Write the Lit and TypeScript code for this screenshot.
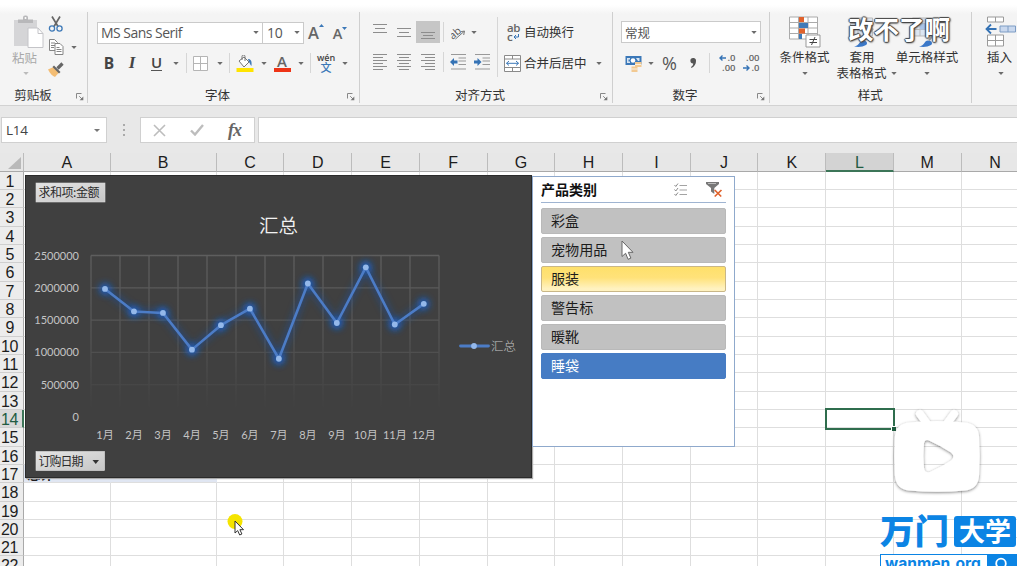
import { LitElement, html, css, svg } from "lit";
import { customElement } from "lit/decorators.js";

const COLS = ["A", "B", "C", "D", "E", "F", "G", "H", "I", "J", "K", "L", "M", "N"];
const ROWS = Array.from({ length: 22 }, (_, i) => i + 1);
const ITEMS = [
  { name: "彩盒", kind: "" },
  { name: "宠物用品", kind: "" },
  { name: "服装", kind: "hover" },
  { name: "警告标", kind: "" },
  { name: "暖靴", kind: "" },
  { name: "睡袋", kind: "on" },
];
const VALUES = [1985000, 1637000, 1614000, 1046000, 1425000, 1680000, 905000, 2070000, 1458000, 2320000, 1435000, 1755000];

const arrow = (c = "") => html`<svg class="arr ${c}" width="6" height="3" viewBox="0 0 6 3"><path d="M.3 0h5.4L3 3z" fill="currentColor"/></svg>`;
const launcher = html`<svg class="launch" width="8" height="8" viewBox="0 0 8 8" fill="none" stroke="#888"><path d="M.5 5.5v-5h5M3.200 3.200l3 3"/><path d="M7.300 3.600v3.700H3.600z" fill="#777" stroke="none"/></svg>`;
const sep = html`<i class="sep"></i>`;
const lines = (rows: number[][]) => html`<svg width="16" height="18" viewBox="0 0 16 18" stroke="#8d8d8d" stroke-width="1">${rows.map(
  ([a, b, y]) => svg`<path d="M${a} ${y}H${b}"/>`)}</svg>`;
const para = (kind: string) =>
  lines([0, 1, 2, 3, 4, 5].map((i) => {
    const short = i % 2 === 1;
    const y = 1.5 + i * 3;
    if (kind === "l") return [1, short ? 11 : 15, y];
    if (kind === "c") return [short ? 3 : 1, short ? 13 : 15, y];
    return [short ? 5 : 1, 15, y];
  }));
const tinyArrow = (left: boolean) => html`<svg class="tiny" width="7" height="6" viewBox="0 0 7 6" fill="none" stroke="#3573b5" stroke-width="1.400">${
  left ? svg`<path d="M7 3H1M3.500.500L1 3l2.500 2.500"/>` : svg`<path d="M0 3h6M3.500.500L6 3 3.500 5.500"/>`}</svg>`;
const pointer = html`<svg width="13" height="21" viewBox="0 0 13 21"><path d="M1 1v15.500l3.600-3.200 2.500 6 2.800-1.200-2.600-5.800H12z" fill="#fff" stroke="#666" stroke-width="1"/></svg>`;

@customElement("pivot-chart")
class PivotChart extends LitElement {
  static styles = css`
    :host { display: block; background: #404040; border: 1px solid #2b2b2b; box-sizing: border-box; box-shadow: 1px 1px 1px #aaa; }
    svg { display: block; }
    .num { font: 11px Lato, "Noto Sans CJK SC", sans-serif; fill: #c4c4c4; }
    .title { font: 350 19.500px "Noto Sans CJK SC", sans-serif; fill: #f2f2f2; }
    .leg { font: 300 12.5px "Noto Sans CJK SC", sans-serif; fill: #c4c4c4; }
    .btn { font: 12px "Noto Sans CJK SC", sans-serif; fill: #2c2c2c; }
  `;
  render() {
    const x = (i: number) => 105 + i * 28.98;
    const y = (v: number) => 417.2 - (v / 500000) * 32.3;
    const pts = VALUES.map((v, i) => `${x(i)},${y(v)}`).join(" ");
    return html`<svg width="505" height="301" viewBox="26 176 505 301">
      <defs>
        <linearGradient id="fade" gradientUnits="userSpaceOnUse" x1="0" y1="255" x2="0" y2="417">
          <stop offset="0" stop-color="#5e5e5e"/><stop offset=".5" stop-color="#545454"/><stop offset=".95" stop-color="#404040"/>
        </linearGradient>
        <linearGradient id="face" x1="0" y1="0" x2="1" y2="1"><stop offset="0" stop-color="#e4e4e4"/><stop offset="1" stop-color="#c6c6c6"/></linearGradient>
        <filter id="glow" filterUnits="userSpaceOnUse" x="80" y="245" width="370" height="140"><feGaussianBlur stdDeviation="3.500"/></filter>
      </defs>
      <g stroke="url(#fade)" fill="none" stroke-width="1.300">
        ${Array.from({ length: 13 }, (_, i) => svg`<path d="M${91 + i * 29} 255.500l.01 161"/>`)}
        ${[0, 1, 2, 3, 4].map((i) => svg`<path d="M91 ${255.5 + i * 32.3}l348 .01"/>`)}
      </g>
      <polyline points=${pts} fill="none" stroke="#1a4f9c" stroke-width="6" opacity=".6" filter="url(#glow)"/>
      <g filter="url(#glow)" fill="#1468e0" opacity=".85">${VALUES.map((v, i) => svg`<circle cx=${x(i)} cy=${y(v)} r="5.500"/>`)}</g>
      <polyline points=${pts} fill="none" stroke="#4c7cc6" stroke-width="2.600" stroke-linejoin="round"/>
      <g fill="#94b8ea">${VALUES.map((v, i) => svg`<circle cx=${x(i)} cy=${y(v)} r="2.900"/>`)}</g>
      <g class="num" text-anchor="end">
        ${[2500000, 2000000, 1500000, 1000000, 500000, 0].map((n, i) => svg`<text x="79" y=${259.5 + i * 32.3}>${n}</text>`)}
      </g>
      <g class="num" text-anchor="middle">${VALUES.map((_, i) => svg`<text x=${x(i)} y="438.500">${i + 1}月</text>`)}</g>
      <text class="title" x="259" y="232.500">汇总</text>
      <path d="M460.500 346h28" stroke="#4c7cc6" stroke-width="2.800" stroke-linecap="round"/><circle cx="474" cy="346" r="2.900" fill="#94b8ea"/>
      <text class="leg" x="491" y="350.500">汇总</text>
      <rect x="36" y="183" width="69" height="19" fill="url(#face)" stroke="#d9d9d9" stroke-width=".6"/>
      <text class="btn" x="38.500" y="197" textLength="61">求和项:金额</text>
      <rect x="36" y="451.500" width="68.500" height="19" fill="url(#face)" stroke="#e5e5e5" stroke-width=".6"/>
      <text class="btn" x="38.500" y="465.500" textLength="45">订购日期</text>
      <path d="M92.500 460h6.500l-3.250 4z" fill="#333"/>
    </svg>`;
  }
}

@customElement("pivot-slicer")
class PivotSlicer extends LitElement {
  static styles = css`
    :host { display: flex; flex-direction: column; box-sizing: border-box; background: #fff; border: 1px solid #8fa9cc; padding: 0 8px; font-family: "Noto Sans CJK SC", sans-serif; }
    header { display: flex; align-items: center; height: 26px; border-bottom: 1.5px solid #9fb4d1; box-sizing: border-box; font-weight: 700; font-size: 14px; line-height: 22px; color: #111; }
    header span { margin-top: -1px; }
    .grow { flex: 1; }
    .funnel { margin: 0 3px 0 18px; }
    .list { display: flex; flex-direction: column; gap: 3px; padding-top: 5px; }
    .item { height: 26px; box-sizing: border-box; border-radius: 2px; background: #c1c1c1; border: 1px solid #b9b9b9; padding-left: 9px; font-size: 14.100px; line-height: 22px; color: #1c1c1c; }
    .hover { background: linear-gradient(#fee06a, #ffe27a 45%, #fff2c0 90%); border-color: #c9b787; }
    .on { background: #467cc4; border-color: #467cc4; color: #fff; }
  `;
  render() {
    return html`<header><span>产品类别</span><span class="grow"></span>
      <svg width="14" height="14" viewBox="0 0 14 14" fill="none" stroke="#a3a3a3"><path d="M5.500 2.500H13M5.500 7H13M5.500 11.500H13"/><path d="M.5 2l1.300 1.500L4 .5M.5 6.500L1.800 8 4 5M.5 11l1.300 1.500L4 9.500" stroke="#8c8c8c"/></svg>
      <svg class="funnel" width="17" height="17" viewBox="0 0 17 17"><path d="M0 1h13v2L8.300 7v6L5 10.500V7L0 3z" fill="#777"/><path d="M2 2.500h8" stroke="#bbb"/><path d="M8.700 9l6.500 6.500M15.500 9l-6.800 6.500" stroke="#e0622c" stroke-width="1.700"/></svg>
    </header>
    <div class="list">${ITEMS.map((i) => html`<div class="item ${i.kind}">${i.name}</div>`)}</div>`;
  }
}

@customElement("excel-ribbon")
class ExcelRibbon extends LitElement {
  static styles = css`
    :host { display: grid; grid-template-columns: 88px 272px 253px 157px 201.500px 45.500px; height: 106px; box-sizing: border-box; padding-top: 12px; border-bottom: 1.500px solid #d2d2d2; background: linear-gradient(#fff, #fff 5px, #f4f4f4 14px); font: 12.500px "Noto Sans CJK SC", sans-serif; color: #333; overflow: hidden; }
    svg { display: block; flex: none; }
    .arr { color: #6b6b6b; }
    .dim { color: #bbb; }
    .group { display: flex; flex-direction: column; height: 91px; border-right: 1px solid #cfcfcf; box-sizing: border-box; min-width: 0; }
    .group:last-child { border: 0; }
    .body { height: 74px; flex: none; box-sizing: border-box; }
    .foot { display: grid; grid-template-columns: 1fr 8px; align-items: center; height: 18px; padding-right: 4px; text-align: center; line-height: 18px; }
    .foot.lead { padding-right: 3px; }
    .foot.lead span { padding-right: 10px; }
    .foot.even { grid-template-columns: 1fr; padding: 0; }
    .launch { margin-top: 3px; }
    .sep { width: 1px; height: 20px; background: #d6d6d6; }
    .row { display: grid; align-items: center; justify-items: center; }
    .clip { display: grid; grid-template-columns: 36px 20px 14px; column-gap: 2px; padding-left: 10px; }
    .paste { display: flex; flex-direction: column; align-items: center; color: #a8a8a8; padding-top: 3px; line-height: 18px; }
    .paste .arr { margin-top: 5px; margin-right: 4px; }
    .paste span { margin-right: 7px; }
    .paste svg:first-child { margin-right: -1px; }
    .tools { display: grid; grid-template-rows: 16px 16px 15px; gap: 7px; padding-top: 4px; }
    .mid { padding-top: 34px; padding-left: 1px; }
    .f1 { grid-template-columns: 166px 41px 24px 24px; padding: 9px 0 0 9px; height: 31px; justify-content: start; box-sizing: border-box; }
    .box { display: flex; align-items: center; justify-content: space-between; height: 22px; width: 100%; box-sizing: border-box; border: 1px solid #cacaca; background: #fff; padding: 0 3px 0 3px; font: 14px "Open Sans", "Noto Sans CJK SC", sans-serif; letter-spacing: -.52px; color: #555; }
    .box.size { border-left: 0; padding-left: 4px; letter-spacing: -.3px; }
    .f2 { grid-template-columns: 22px 24px 25px 14px 6px 23px 15px 5px 25px 13px 24px 14px 5px 26px 11px; height: 40px; padding-left: 10px; justify-content: start; }
    .bt { font: 700 15.500px "Open Sans", sans-serif; color: #444; }
    .it { font: italic 700 17px "Liberation Serif", serif; }
    .un { display: block; font-weight: 600; font-size: 15px; line-height: 15px; border-bottom: 1.500px solid #555; }
    .big { font: 600 16.500px "Open Sans", sans-serif; color: #666; display: flex; }
    .big.small { font-size: 14.500px; padding-top: 1px; }
    .big svg { margin-top: 3px; }
    .fcol { display: flex; flex-direction: column; align-items: center; font: 600 15px/14px "Open Sans", sans-serif; color: #666; }
    .bar { width: 17px; height: 4px; background: #ee3416; }
    .wen { display: flex; flex-direction: column; align-items: center; font: 600 9px/8px "Open Sans", sans-serif; color: #444; }
    .wen b { font: 500 11px/11px "Noto Sans CJK SC", sans-serif; color: #3b78b8; }
    .align { display: grid; grid-template-columns: 129px 7px auto; padding-left: 8px; justify-content: start; }
    .a1 { grid-template-columns: 24px 24px 24px 6px 24px 7px; height: 22px; margin-top: 9px; justify-content: start; }
    .a2 { grid-template-columns: 24px 24px 24px 6px 24px 24px; height: 22px; margin-top: 8px; justify-content: start; }
    .sel { display: grid; place-items: center; width: 24px; height: 22px; background: #c6c6c6; }
    .tall { width: 1px; height: 60px; margin-top: 5px; background: #d6d6d6; }
    .txt { display: grid; grid-template-columns: 16px auto auto; align-items: center; column-gap: 4px; justify-content: start; height: 22px; margin-top: 9px; line-height: 20px; }
    .txt + .txt { margin-top: 9px; }
    .txt .arr { margin-left: 5px; }
    .ab { display: grid; font: 600 11.500px/9px "Open Sans", sans-serif; color: #666; padding-left: 3px; letter-spacing: -.3px; }
    .ab span { display: flex; align-items: center; gap: 1px; }
    .num { padding: 9px 8px 0; }
    .num .box { font: 12.500px "Noto Sans CJK SC", sans-serif; letter-spacing: 0; }
    .n2 { grid-template-columns: 24px 12px 25px 22px 10px 27px 21px; height: 40px; justify-content: start; }
    .pct { font: 18px "Open Sans", sans-serif; color: #555; }
    .dec { display: grid; justify-items: end; font: 600 9.500px/10px "Open Sans", sans-serif; color: #666; white-space: nowrap; }
    .dec span { display: flex; align-items: center; gap: 1px; }
    .styles { display: grid; grid-template-columns: 55px 60px 70px; padding: 3px 0 0 7px; }
    .col { display: flex; flex-direction: column; align-items: center; line-height: 17px; white-space: nowrap; }
    .col > svg:first-child { height: 33px; }
    .col > .arr { margin-top: 7px; }
    .two { display: flex; align-items: center; gap: 4px; margin-right: -9px; line-height: 16px; }
    .cells { padding: 3px 0 0 13px; }
    .cells .col { width: 32px; }
    .cells .col > span { margin-right: 2px; }
  `;
  render() {
    return html`
    <div class="group">
      <div class="body clip">
        <div class="paste">
          <svg width="31" height="34" viewBox="0 0 31 34"><path d="M1 5h23v26H1z" fill="#d5d5d7"/><path d="M5 4.500h5V2.500a2 2 0 0 1 2-2h1a2 2 0 0 1 2 2v2h5V8H5z" fill="#b8b8ba"/><circle cx="12.500" cy="3" r="1" fill="#fff"/><path d="M15 13h10l5 5.500V32.500H15z" fill="#fff" stroke="#c4c4c8"/><path d="M25 13v5.500h5" fill="none" stroke="#c4c4c8"/></svg>
          <span>粘贴</span>${arrow("dim")}
        </div>
        <div class="tools">
          <svg width="16" height="16" viewBox="0 0 16 16" fill="none"><path d="M4 .5l6 10M12 .5l-6 10" stroke="#666" stroke-width="1.700"/><circle cx="4" cy="12.500" r="2.600" stroke="#3f7ab8" stroke-width="1.300"/><circle cx="11.500" cy="12.500" r="2.600" stroke="#3f7ab8" stroke-width="1.300"/></svg>
          <svg width="17" height="17" viewBox="0 0 17 17" fill="#fff" stroke="#858585"><path d="M1.500.500h5l3 3v8h-8z"/><path d="M3 4h4M3 6.500h4M3 8.500h3"/><path d="M7 4.500h5l3 3v8H7z"/><path d="M8.500 8.500h3M8.500 10.500h5M8.500 12.500h5"/></svg>
          <svg width="16" height="15" viewBox="0 0 16 15"><path d="M0 7.500L5.500 5l5.500 5.500L7 15c-2.500-1-5-3.500-7-7.500z" fill="#f3bd74"/><path d="M6 3.500l6.500 6.500-1.500 1.500L4.500 5z" fill="#666"/><path d="M9.500 6.500l5-5" stroke="#666" stroke-width="3.200"/></svg>
        </div>
        <div class="mid">${arrow()}</div>
      </div>
      <div class="foot lead"><span>剪贴板</span>${launcher}</div>
    </div>

    <div class="group">
      <div class="body">
        <div class="row f1">
          <div class="box"><span>MS Sans Serif</span>${arrow()}</div>
          <div class="box size"><span>10</span>${arrow()}</div>
          <div class="big">A<svg width="5" height="3"><path d="M0 3h5L2.500 0z" fill="#3b78b8"/></svg></div>
          <div class="big small">A<svg width="5" height="3"><path d="M0 0h5L2.500 3z" fill="#3b78b8"/></svg></div>
        </div>
        <div class="row f2">
          <span class="bt">B</span><span class="bt it">I</span><span class="bt un">U</span>${arrow()}${sep}
          <svg width="15" height="15" viewBox="0 0 15 15" fill="#fff" stroke="#b5b5b5"><path d="M.5.500h14v14H.500zM7.500.500v14M.5 7.500h14"/></svg>${arrow()}${sep}
          <svg width="18" height="17" viewBox="0 0 18 17"><path d="M3 6l5-4 5 5-5 5z" fill="#fff" stroke="#777"/><path d="M6 5V1.500a1.500 1.500 0 0 1 3 0V6" fill="none" stroke="#777"/><path d="M12 4c3 0 4 2 3.500 7-1.500-1-1.500-3-2.500-4z" fill="#3f7ab8"/><path d="M.5 13h17v4H.5z" fill="#ffe400"/></svg>${arrow()}
          <div class="fcol">A<i class="bar"></i></div>${arrow()}${sep}
          <div class="wen">wén<b>文</b></div>${arrow()}
        </div>
      </div>
      <div class="foot"><span>字体</span>${launcher}</div>
    </div>

    <div class="group">
      <div class="body align">
        <div>
          <div class="row a1">
            ${lines([[1, 15, 1.5], [3, 13, 5.5], [1, 15, 9.5]])}
            ${lines([[1, 15, 5.5], [3, 13, 9.5], [1, 15, 13.5]])}
            <div class="sel">${lines([[1, 15, 9.5], [3, 13, 12.5], [1, 15, 15.5]])}</div>${sep}
            <svg width="15" height="15" viewBox="0 0 15 15"><text x="-2" y="11" font-size="10.500" font-family="Open Sans" fill="#555" transform="rotate(-42 5 8)">ab</text><path d="M4.500 14L13 6.500M13.500 6l-4 .8M13.500 6l-.8 4" stroke="#777" fill="none"/></svg>${arrow()}
          </div>
          <div class="row a2">
            ${para("l")}${para("c")}${para("r")}${sep}
            <svg width="16" height="16" viewBox="0 0 16 16"><path d="M1 .500h15M8.500 4h7.500M8.500 7h7.500M8.500 10.500h7.500M1 15h15" stroke="#999"/><path d="M0 8l4-4v2.500h3.500v3H4V12z" fill="#3573b5"/></svg>
            <svg width="16" height="16" viewBox="0 0 16 16"><path d="M1 .500h15M8.500 4h7.500M8.500 7h7.500M8.500 10.500h7.500M1 15h15" stroke="#999"/><path d="M7.500 8l-4-4v2.500H0v3h3.500V12z" fill="#3573b5"/></svg>
          </div>
        </div>
        <i class="tall"></i>
        <div>
          <div class="txt"><div class="ab">ab<span>c<svg width="6" height="6" viewBox="0 0 6 6" fill="none" stroke="#3573b5"><path d="M5.500 0v3H1M3 1L1 3l2 2"/></svg></span></div><span>自动换行</span></div>
          <div class="txt"><svg width="17" height="17" viewBox="0 0 17 17" fill="#fff" stroke="#8a8a8a"><path d="M.5.500h16v16H.500zM.5 4h16M.5 12.500h16M8.500.500V4M8.500 12.500v4"/><path d="M2.500 8.300h12M5 6L2.500 8.300 5 10.500M12 6l2.500 2.300L12 10.500" fill="none" stroke="#3b78b8"/></svg><span>合并后居中</span>${arrow()}</div>
        </div>
      </div>
      <div class="foot"><span>对齐方式</span>${launcher}</div>
    </div>

    <div class="group">
      <div class="body num">
        <div class="box"><span>常规</span>${arrow()}</div>
        <div class="row n2">
          <svg width="17" height="17" viewBox="0 0 17 17"><path d="M.5 1h16v9H.500z" fill="#3b78b8"/><path d="M2 3h3v1.500H3.500V6.500H5V8H2zM11 3h3.500v3H13z" fill="#fff" opacity=".8"/><circle cx="8" cy="5.500" r="2.300" fill="#fff"/><path d="M10 7h6.500v5H10zM6.500 11.500h6V17h-6z" fill="#f2c992"/><path d="M10 9.500h6.500M6.500 14h6" stroke="#fff" stroke-width=".7"/></svg>${arrow()}
          <span class="pct">%</span>
          <svg width="7" height="10" viewBox="0 0 7 10"><path d="M3 0a2.700 2.700 0 0 1 3 3c0 3-1.500 5.500-4.500 7L1 9c1.500-1 2.200-2.200 2.200-3.600A2.700 2.700 0 0 1 3 0z" fill="#555"/></svg>${sep}
          <div class="dec"><span>${tinyArrow(true)}.0</span><span>.00</span></div><div class="dec"><span>.00</span><span>${tinyArrow(false)}.0</span></div>
        </div>
      </div>
      <div class="foot"><span>数字</span>${launcher}</div>
    </div>

    <div class="group">
      <div class="body styles">
        <div class="col">
          <svg width="32" height="32" viewBox="0 0 32 32"><path d="M.5 1.500h28v22H.500zM.5 7h28M.5 12.500h28M.5 18h28M9.500 1.500v22M19 1.500v22" fill="#fff" stroke="#aaa"/><path d="M10 1.500h5v5h-5zM10 13h6v5h-6z" fill="#e0622c"/><path d="M10 7.500h9v5h-9zM10 18.500h3v5h-3z" fill="#3f7ab8"/><path d="M17 19.500h14v12H17z" fill="#fff" stroke="#999"/><path d="M20.500 24h7.500M20.500 27h7.500M26 21.500l-3.500 8" stroke="#444"/></svg>
          <span>条件格式</span>${arrow()}
        </div>
        <div class="col">
          <svg width="32" height="32" viewBox="0 0 32 32"><path d="M4.500 2.500h22v18h-22zM4.500 8h22M4.500 14h22M12 2.500v18M19 2.500v18" fill="#dce6f2" stroke="#bbb"/><path d="M8 31c6-1 5-6 9-6 4 0 5 3 3 4.500-3 2-8 2.500-12 1.500z" fill="#3b78c8"/><path d="M18 25l9-12" stroke="#999" stroke-width="2"/></svg>
          <span>套用</span><div class="two">表格格式 ${arrow()}</div>
        </div>
        <div class="col">
          <svg width="32" height="32" viewBox="0 0 32 32"><path d="M1.500 2.500h26v18h-26zM1.500 8h26M1.500 14h26M9 2.500v18M20 2.500v18" fill="#dce6f2" stroke="#bbb"/><path d="M9 8h11v6H9z" fill="#a9c4e8"/><path d="M8 31c6-1 5-6 9-6 4 0 5 3 3 4.500-3 2-8 2.500-12 1.500z" fill="#3b78c8"/><path d="M18 25l9-12" stroke="#999" stroke-width="2"/></svg>
          <span>单元格样式</span>${arrow()}
        </div>
      </div>
      <div class="foot even"><span>样式</span></div>
    </div>

    <div class="group">
      <div class="body cells"><div class="col">
        <svg width="31" height="32" viewBox="0 0 31 32"><g fill="#fff" stroke="#9a9a9a"><path d="M2.500 1.500h16v5h-16zM10.500 1.500v5M2.500 19.500h16v11h-16zM10.500 19.500v11M2.500 25h16"/><path d="M15 10.500h15.500v6H15zM23 10.500v6" fill="#c9d8ee" stroke="#7d9cc4"/></g><path d="M11.500 13.500H2M6 9l-4.500 4.500L6 18" stroke="#3573b5" stroke-width="1.800" fill="none"/></svg>
        <span>插入</span>${arrow()}
      </div></div>
    </div>`;
  }
}

@customElement("app-root")
class AppRoot extends LitElement {
  static styles = css`
    :host { display: block; position: relative; width: 1017px; height: 566px; overflow: hidden; background: #fff; }
    svg { display: block; }
    .formula { display: grid; grid-template-columns: 106px 33px 115px 1fr; height: 47px; box-sizing: border-box; padding: 11px 0 10px 1px; background: #e8e8e8; }
    .fbox { background: #fff; border: 1px solid #d0d0d0; display: flex; align-items: center; box-sizing: border-box; }
    .name { justify-content: space-between; padding: 0 6px 0 4px; font: 13.500px "Open Sans", sans-serif; letter-spacing: -.3px; color: #444; }
    .dots { display: grid; place-items: center; }
    .acts { justify-content: space-between; padding: 0 13px 0 12px; }
    .fx { font: italic 600 18px/20px "Liberation Serif", serif; color: #666; letter-spacing: -1px; }
    .line { margin-left: 3px; border-right: 0; }
    .sheet { display: grid; grid-template-columns: 24.200px 86.500px 106px repeat(12, 67.720px); grid-template-rows: 18.600px repeat(22, 18.330px); font: 16px "Liberation Sans", sans-serif; color: #1d1d1d; }
    .head { background: #e7e7e7; border-right: 1px solid #bcbcbc; border-bottom: 1px solid #a9a9a9; text-align: center; line-height: 19px; box-sizing: border-box; overflow: hidden; }
    .head.cur { background: #d3d3d3; border-bottom: 2px solid #3c7558; color: #215c42; }
    .corner { display: grid; justify-items: end; align-items: end; padding: 0 2px 2px 0; }
    .rowh { background: #ececec; border-right: 1px solid #a9a9a9; border-bottom: 1px solid #cfcfcf; text-align: right; padding-right: 5px; box-sizing: border-box; line-height: 19px; letter-spacing: -.3px; overflow: hidden; }
    .rowh.one { padding-right: 9px; }
    .rowh.cur { background: #d9d9d9; border-right: 2px solid #3c7558; padding-right: 4px; color: #215c42; }
    .cell { border-right: 1px solid #dedede; border-bottom: 1px solid #dedede; box-sizing: border-box; overflow: hidden; }
    .cell.total { background: #e0e6f2; border-right-color: #e0e6f2; font: 700 13px/17px "Noto Sans CJK SC", sans-serif; padding-left: 3px; }
    .over { position: absolute; }
    .chart { left: 25px; top: 175px; width: 507px; height: 303px; }
    .slicer { left: 532px; top: 176px; width: 203px; height: 271px; }
    .pick { left: 825px; top: 408px; width: 70px; height: 22px; box-sizing: border-box; border: 2px solid #2f6d4d; }
    .pick i { position: absolute; right: -3px; bottom: -3px; width: 4px; height: 4px; background: #1f5d3f; border: 1px solid #fff; border-width: 1px 0 0 1px; }
    .p1 { left: 621px; top: 240px; }
    .p2 { left: 227px; top: 513px; }
    .tv { left: 884px; top: 400px; }
    .danmaku { left: 848px; top: 10px; font: 700 25.500px/36px "Noto Sans CJK SC", sans-serif; color: #fff; text-shadow: 1px 0 1px #444, -1px 0 1px #444, 0 1px 1px #444, 0 -1px 1px #444, 1px 1px 2px #555; }
    .brand { left: 880px; top: 514px; width: 137px; color: #0b84e4; font-family: "Noto Sans CJK SC", sans-serif; }
    .marks { display: grid; grid-template-columns: 74px 62px; height: 34px; align-items: center; font-weight: 700; }
    .wm { font-size: 34.500px; line-height: 30px; font-weight: 900; padding-bottom: 4px; }
    .uni { height: 31px; background: #0b84e4; color: #fff; border-radius: 3px; font-size: 26px; line-height: 28px; text-align: center; }
    .url { display: grid; grid-template-columns: 1fr 29px; height: 22px; margin-top: 6px; box-sizing: border-box; border: 1.500px solid #0b84e4; background: #fff; font: 700 15.600px/18px Inter, sans-serif; }
    .url span { padding-left: 4px; }
    .find { background: #0b84e4; display: grid; justify-items: center; padding-top: 2px; }
  `;
  render() {
    return html`
      <excel-ribbon></excel-ribbon>
      <div class="formula">
        <div class="fbox name"><span>L14</span><svg width="6" height="3"><path d="M0 0h6L3 3z" fill="#777"/></svg></div>
        <div class="dots"><svg width="2" height="12"><path d="M0 0h2v2H0zM0 5h2v2H0zM0 10h2v2H0z" fill="#aaa"/></svg></div>
        <div class="fbox acts">
          <svg width="13" height="13" viewBox="0 0 13 13"><path d="M1 1l11 11M12 1L1 12" stroke="#bdbdbd" stroke-width="1.600"/></svg>
          <svg width="14" height="12" viewBox="0 0 14 12"><path d="M1 6.500l4 4L13 1" stroke="#bdbdbd" stroke-width="2.400" fill="none"/></svg>
          <span class="fx">fx</span>
        </div>
        <div class="fbox line"></div>
      </div>
      <div class="sheet">
        <div class="head corner"><svg width="13" height="12"><path d="M13 0v12H0z" fill="#b9b9b9"/></svg></div>
        ${COLS.map((c) => html`<div class="head ${c === "L" ? "cur" : ""}">${c}</div>`)}
        ${ROWS.map((r) => html`
          <div class="rowh ${r < 10 ? "one" : ""} ${r === 14 ? "cur" : ""}">${r}</div>
          ${COLS.map((c, i) => html`<div class="cell ${r === 17 && i < 2 ? "total" : ""}">${r === 17 && i === 0 ? "总计" : ""}</div>`)}`)}
      </div>
      <pivot-chart class="over chart"></pivot-chart>
      <pivot-slicer class="over slicer"></pivot-slicer>
      <div class="over pick"><i></i></div>
      <div class="over p1">${pointer}</div>
      <svg class="over p2" width="20" height="24" viewBox="0 0 20 24"><circle cx="8" cy="8.500" r="7.500" fill="#f5e400"/><path d="M8 8v12l2.700-2.400 2 4.400 2.200-1-2-4.300h3.600z" fill="#fff" stroke="#333"/></svg>
      <svg class="over tv" width="106" height="100" viewBox="0 0 106 100">
        <defs><filter id="sh" x="-20%" y="-20%" width="140%" height="140%"><feDropShadow dx="0" dy="1" stdDeviation="1.800" flood-color="#000" flood-opacity=".5"/></filter></defs>
        <g filter="url(#sh)"><path d="M36 14l8 11M70 14l-8 11" stroke="#fff" stroke-width="8" stroke-linecap="round"/>
        <path fill-rule="evenodd" d="M25 22.500Q53 19.500 81 22.500 94 24 95 36 96.500 56 95 76 94 89 81 90.500 53 93 25 90.500 12 89 11 76 9.500 56 11 36 12 24 25 22.500zM46 41q-5-2.500-6 2-1.200 13 0 25 1 5.500 6 4 12-5.500 21-11.500 4.500-4 0-8Q57 46 46 41z" fill="#fff"/></g>
      </svg>
      <div class="over danmaku">改不了啊</div>
      <div class="over brand">
        <div class="marks"><span class="wm">万门</span><span class="uni">大学</span></div>
        <div class="url"><span>wanmen.org</span><div class="find"><svg width="15" height="15" viewBox="0 0 15 15" fill="none" stroke="#fff" stroke-width="1.800"><circle cx="7" cy="6.500" r="4.800"/><path d="M10.500 10l3.500 4"/></svg></div></div>
      </div>`;
  }
}
